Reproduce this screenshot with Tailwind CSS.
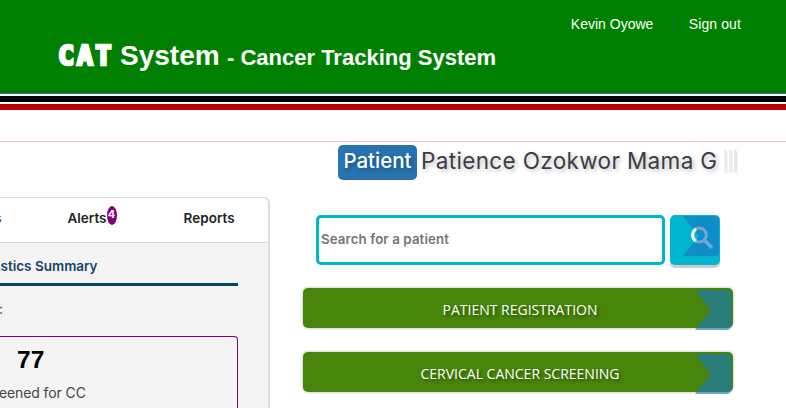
<!DOCTYPE html>
<html lang="en">
<head>
<meta charset="utf-8">
<title>CAT System</title>
<script src="https://cdn.jsdelivr.net/npm/@tailwindcss/browser@4"></script>
</head>
<body class="h-[408px] w-[786px] overflow-hidden bg-white font-['Inter',sans-serif] text-[#444]">
<header class="flex h-[94px] flex-col border-b border-[#2f6f7f] bg-[#008000] font-['Liberation_Sans',sans-serif] text-white">
  <nav class="flex h-[36px] items-end justify-end pr-[45px] text-[14px]">
    <a class="flex h-6 items-center pr-[19.5px]">Kevin Oyowe</a>
    <a class="flex h-6 items-center border-l border-[#1d6f50] pl-[15px] tracking-[0.1px]">Sign out</a>
  </nav>
  <h1 class="-mt-[1px] flex h-[42px] items-baseline pl-[58px] font-bold whitespace-nowrap">
    <span class="w-[62px] font-['DejaVu_Sans_Mono',monospace] text-[27px] leading-[42px] font-bold tracking-[2.4px] [-webkit-text-stroke:2.6px_white]">CAT</span>
    <span class="w-[107px] text-[28px]">System</span>
    <span class="text-[22px]">- Cancer Tracking System</span>
  </h1>
</header>
<div class="mt-[2px] h-[6px] bg-black"></div>
<div class="mt-[2px] h-[6px] bg-[#bb0000]"></div>
<main class="mt-[31px] flex h-[267px] items-start overflow-hidden border-t border-[#ffc0cb]">
  <aside class="mt-[55px] h-[211px] w-[270px] shrink-0 overflow-hidden rounded-tr-[6px] border-t border-r-2 border-[#ddd] bg-[#f4f4f4]">
    <div class="flex h-[45px] items-center rounded-tr-[5px] border-b border-[#d8d8d8] bg-white pb-[3px] text-[13.5px] font-semibold text-[#222]">
      <span class="-ml-[6px] w-[73.5px]">s</span>
      <span class="flex w-[116px]">Alerts<sup class="top-0 mt-[-2px] flex h-[19px] w-[10px] items-center justify-center rounded-[50%] bg-[#800080] pb-[3px] text-[11px] font-bold text-white">4</sup></span>
      <span class="tracking-[0.05px]">Reports</span>
    </div>
    <h2 class="flex h-[43px] w-[238px] items-center border-b-[3px] border-[#06436b] pt-[6px] text-[13.5px] font-semibold text-[#154468]"><span class="-ml-[3px]">istics Summary</span></h2>
    <p class="-ml-[1px] h-[50px] pt-[12px] text-[14px]">:</p>
    <div class="h-[72px] w-[238px] rounded-tr-[4px] border-t border-r border-[#800080]">
      <p class="pt-[7px] pl-[17px] font-['Liberation_Sans',sans-serif] text-[24.5px] leading-[31px] font-bold text-black">77</p>
      <p class="-ml-[6px] pt-[7px] text-[14px] leading-[21px] tracking-[-0.1px]">reened for CC</p>
    </div>
  </aside>
  <section class="ml-[33px] w-[436px]">
    <h2 class="mt-[3px] ml-[35px] flex h-[35px] items-center text-[22.5px] whitespace-nowrap text-[#3c3c46] [text-shadow:2px_2px_4px_#bbb]">
      <span class="mr-[4px] flex h-[35px] w-[79px] items-center justify-center rounded-[5px] bg-[#2774b0] pb-[3px] text-[20.5px] font-medium text-white [text-shadow:2px_2px_4px_#155080]">Patient</span>
      <span class="w-[303px] pb-[4px] tracking-[0.35px]">Patience Ozokwor Mama G</span>
      <span class="-mt-[4px] flex gap-[3px]"><i class="h-[22px] w-[2px] bg-[#eee] shadow-[1px_1px_2px_#ddd]"></i><i class="h-[22px] w-[2px] bg-[#eee] shadow-[1px_1px_2px_#ddd]"></i><i class="h-[22px] w-[2px] bg-[#eee4e4] shadow-[1px_1px_2px_#ddd]"></i></span>
    </h2>
    <div class="mt-[35px] ml-[13px] flex gap-[5px]">
      <div class="flex h-[50px] w-[349px] items-center rounded-[5px] border-[3px] border-[#00b5cf] pl-[2px] text-[13.3px] font-semibold tracking-[0.1px] text-[#757575]">Search for a patient</div>
      <button class="h-[50px] w-[50px] rounded-[5px] bg-[#00b5cf] shadow-[0_3px_0_#ccc]" aria-label="Search">
        <svg width="50" height="50" viewBox="0 0 50 50"><path d="M13 1H45q4 0 4 4V38q0 3-4 3H13L29 21Z" fill="#1777c2" fill-opacity=".64"/><g fill="none" stroke="#6fa9d8"><circle cx="29.3" cy="20" r="7" stroke-width="3"/><path d="M34.5 25.2 42 32.7" stroke-width="3.5"/></g><path d="M26 14a7 7 0 0 0 0 12" fill="none" stroke="#fff" stroke-width="3"/></svg>
      </button>
    </div>
    <div class="mt-[23px] flex flex-col gap-[24px] font-['Open_Sans',sans-serif] text-[14px] text-white">
      <button class="relative h-[40px] w-[430px] rounded-[5px] bg-[#47860b] pt-[3px] pl-[4px] shadow-[0_0_3px_#aaa] [text-shadow:2px_2px_3px_#285000]">PATIENT REGISTRATION<svg class="absolute top-0 right-0" width="40" height="42" viewBox="0 0 40 42"><path d="M2 2H35q3.500 0 3.500 4V37q-1 4-4 5H2L18 22Z" fill="#1777c2" fill-opacity=".6"/></svg></button>
      <button class="relative h-[40px] w-[430px] rounded-[5px] bg-[#47860b] pt-[3px] pl-[4px] shadow-[0_0_3px_#aaa] [text-shadow:2px_2px_3px_#285000]">CERVICAL CANCER SCREENING<svg class="absolute top-0 right-0" width="40" height="42" viewBox="0 0 40 42"><path d="M2 2H35q3.500 0 3.500 4V37q-1 4-4 5H2L18 22Z" fill="#1777c2" fill-opacity=".6"/></svg></button>
    </div>
  </section>
</main>
</body>
</html>
